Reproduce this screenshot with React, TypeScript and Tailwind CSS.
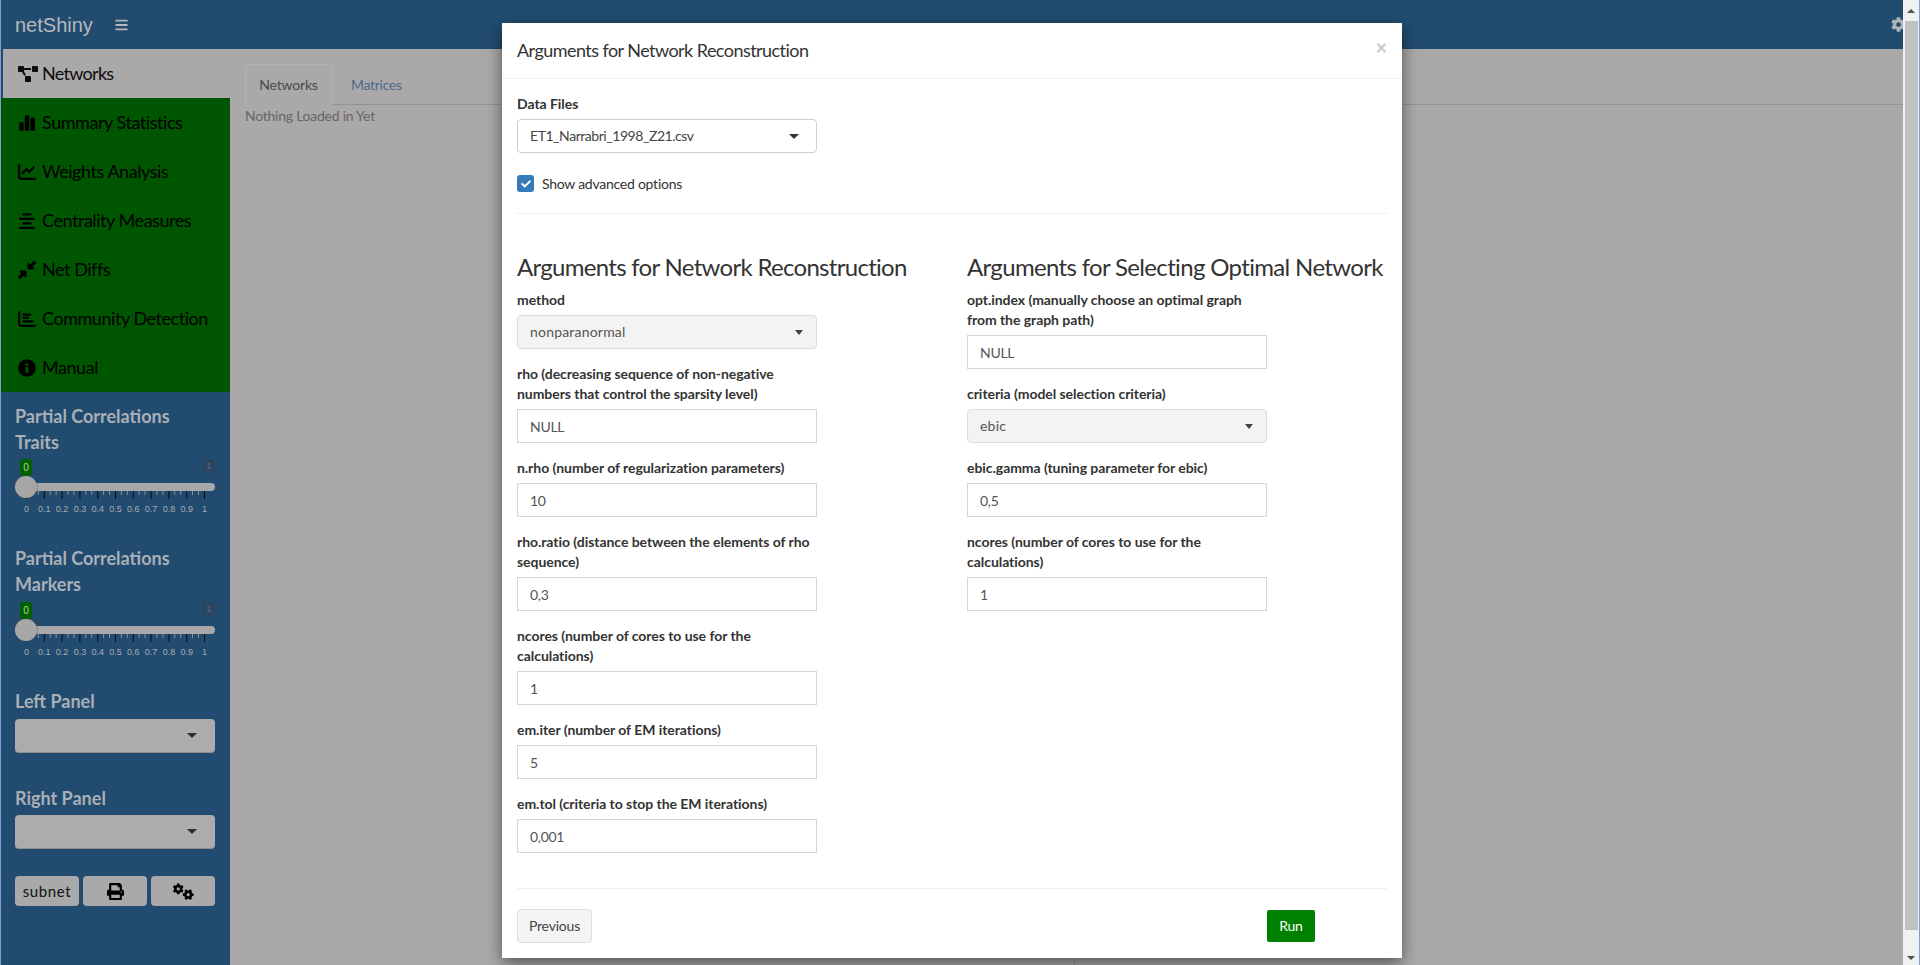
import React from 'react';
import { FaBars, FaCog, FaPrint, FaProjectDiagram, FaInfoCircle, FaCheck, FaAlignCenter } from 'react-icons/fa';
import { FaChartSimple, FaChartLine, FaChartBar, FaDownLeftAndUpRightToCenter, FaGears } from 'react-icons/fa6';

const navItems = [
    { label: 'Summary Statistics', Icon: FaChartSimple },
    { label: 'Weights Analysis', Icon: FaChartLine },
    { label: 'Centrality Measures', Icon: FaAlignCenter },
    { label: 'Net Diffs', Icon: FaDownLeftAndUpRightToCenter },
    { label: 'Community Detection', Icon: FaChartBar },
    { label: 'Manual', Icon: FaInfoCircle },
];

const ticks = ['0', '0.1', '0.2', '0.3', '0.4', '0.5', '0.6', '0.7', '0.8', '0.9', '1'];

const Caret = ({ className }: { className: string }) => (
    <span className={`w-0 h-0 border-t-[5px] ${className}`} />
);

const Slider = () => (
    <div className="relative h-[62px] w-[200px]">
        <span className="absolute left-[5px] top-0 w-[12px] h-[17px] rounded-[3px] bg-[#006000] text-[#b9cf9c] text-[10px] leading-[17px] text-center font-['Liberation_Sans',sans-serif]">0</span>
        <span className="absolute right-0 top-0 w-[12px] h-[14px] rounded-[3px] bg-[#2b4560] text-[#55616e] text-[9px] font-bold leading-[14px] text-center font-['Liberation_Sans',sans-serif]">1</span>
        <div className="absolute left-0 right-0 top-[24px] h-[8px] rounded-full bg-[#a8a8a8]" />
        <svg className="absolute left-0 top-[32px]" width="200" height="14">
            {ticks.map((_, i) => (
                <line key={i} x1={11.5 + i * 17.8} x2={11.5 + i * 17.8} y1={i === 0 ? 7 : 0} y2="8" stroke="#0c0c0c" strokeWidth="1" />
            ))}
            {Array.from({ length: 30 }, (_, i) => i).filter(i => i % 3 !== 0).map(i => (
                <line key={i} x1={11.5 + i * 5.93} x2={11.5 + i * 5.93} y1="0" y2="4" stroke="#8b8f94" strokeWidth="1" />
            ))}
        </svg>
        <div className="absolute left-0 top-[17px] w-[22px] h-[22px] rounded-full bg-[#a6a6a6] shadow-[0_0_2px_#555]" />
        <div className="absolute left-0 top-[44px] w-full">
            {ticks.map((t, i) => (
                <span key={t} className="absolute w-[24px] -ml-[12px] top-0 text-center text-[9px] leading-[12px] text-[#a9adb1] font-['Liberation_Sans',sans-serif]" style={{ left: 11.5 + i * 17.8 }}>{t}</span>
            ))}
        </div>
    </div>
);

const Label = ({ lines }: { lines: string[] }) => (
    <label className="block mb-[5px] text-sm leading-5 font-bold text-[#333] tracking-[-0.05px] whitespace-nowrap">
        {lines.map(l => <span key={l} className="block">{l}</span>)}
    </label>
);

const TextField = ({ lines, value }: { lines: string[]; value: string }) => (
    <div className="mb-[15px] w-[300px]">
        <Label lines={lines} />
        <input readOnly value={value} className="block w-full h-[34px] px-3 text-sm tracking-[-0.3px] text-[#555] bg-white border border-[#d2d6de] outline-none" />
    </div>
);

const SelectField = ({ lines, value }: { lines: string[]; value: string }) => (
    <div className="mb-[15px] w-[300px]">
        <Label lines={lines} />
        <div className="flex items-center justify-between h-[34px] pl-3 pr-[13px] text-sm text-[#555] bg-[#f3f3f3] border border-[#dcdcdc] rounded-[4px] tracking-[0.2px]">
            {value}
            <Caret className="border-x-[4px] border-x-transparent border-t-[#444]" />
        </div>
    </div>
);

const sideHeading = "text-[18px] leading-[25.7px] font-bold text-[#a9afb6]";

export default function App() {
    return (
        <div className="relative flex h-screen w-full overflow-hidden bg-[#aaa8a9] font-['Lato',sans-serif] text-[#333]">
            <div className="flex flex-col flex-1 min-w-0 border-l border-l-[#7f9fd0]">
                {/* top bar */}
                <header className="flex items-center justify-between h-[49px] shrink-0 overflow-hidden bg-[#214c70]">
                    <div className="flex items-center">
                        <span className="ml-[14px] text-[20px] text-[#b6b8ba] font-['Liberation_Sans',sans-serif]">netShiny</span>
                        <FaBars className="ml-[22px] w-[13px] h-[14px] text-[#b6b8ba]" />
                    </div>
                    <FaCog className="-mr-[3px] w-[15px] h-[15px] shrink-0 text-[#aeb3b8]" />
                </header>

                <div className="flex flex-1 min-h-0">
                    {/* sidebar */}
                    <aside className="w-[229px] shrink-0 bg-[#214b6f]">
                        <div className="flex items-center h-[49px] ml-[2px] pl-[15px] bg-[#aaa8a9] text-[#0d0d0d] text-[18px] tracking-[-0.7px]">
                            <FaProjectDiagram className="w-[20px] h-[18px] mr-[4px]" />
                            Networks
                        </div>
                        <nav className="bg-[#005500]">
                            {navItems.map(({ label, Icon }) => (
                                <div key={label} className="flex items-center h-[49px] pl-[17px] text-[18px] tracking-[-0.45px] text-black">
                                    <span className="flex justify-start w-[24px] shrink-0"><Icon className="w-[18px] h-[18px]" /></span>
                                    {label}
                                </div>
                            ))}
                        </nav>
                        <div className="pl-[14px] pt-[12px] w-[214px]">
                            <p className={sideHeading}>Partial Correlations<br />Traits</p>
                            <div className="mt-[4px]"><Slider /></div>
                            <p className={`mt-[25px] ${sideHeading}`}>Partial Correlations<br />Markers</p>
                            <div className="mt-[4px]"><Slider /></div>
                            <p className={`mt-[25px] ${sideHeading}`}>Left Panel</p>
                            <div className="mt-[4px] flex items-center justify-end h-[34px] pr-[18px] rounded-[4px] bg-[#acacac] border-b border-[#8d8d8d]">
                                <Caret className="border-x-[5px] border-x-transparent border-t-[#2c2c2c]" />
                            </div>
                            <p className={`mt-[33px] ${sideHeading}`}>Right Panel</p>
                            <div className="mt-[4px] flex items-center justify-end h-[34px] pr-[18px] rounded-[4px] bg-[#acacac] border-b border-[#8d8d8d]">
                                <Caret className="border-x-[5px] border-x-transparent border-t-[#2c2c2c]" />
                            </div>
                            <div className="flex gap-[4px] mt-[27px]">
                                <button className="w-[64px] h-[30px] rounded-[4px] bg-[#a9a9a9] text-[15px] text-[#111] tracking-[0.6px]">subnet</button>
                                <button className="flex items-center justify-center w-[64px] h-[30px] rounded-[4px] bg-[#a9a9a9]"><FaPrint className="w-[17px] h-[17px] text-black" /></button>
                                <button className="flex items-center justify-center w-[64px] h-[30px] rounded-[4px] bg-[#a9a9a9]"><FaGears className="w-[21px] h-[17px] text-black" /></button>
                            </div>
                        </div>
                    </aside>

                    {/* main */}
                    <main className="relative flex-1 pl-[15px] pt-[15px] text-sm">
                        <div className="flex h-[41px] border-b border-b-[#959394]">
                            <div className="flex items-center justify-center w-[87px] h-[41px] rounded-t-[4px] bg-[#aaa8a9] border border-[#b3b1b2] border-b-0 text-[#4a4a4a] tracking-[-0.2px]">Networks</div>
                            <div className="ml-[19px] flex items-center h-[41px] text-[#4f6b8a] tracking-[-0.3px]">Matrices</div>
                        </div>
                        <p className="mt-px leading-5 text-[#686667] tracking-[-0.25px]">Nothing Loaded in Yet</p>
                        <div className="absolute left-[844px] top-[200px] bottom-0 w-px bg-[#8f8d8e]" />
                    </main>
                </div>
            </div>

            {/* page scrollbar */}
            <div className="flex flex-col w-[17px] shrink-0 bg-[#f1f1f1] border-r border-r-[#7f9fd0]">
                <div className="flex items-center justify-center h-[21px] bg-[#f1f1f1]"><span className="w-0 h-0 border-x-[4px] border-x-transparent border-b-[4px] border-b-[#505050]" /></div>
                <div className="ml-[2px] mr-px h-[909px] bg-[#c1c1c1]" />
                <div className="flex flex-1 items-end justify-center pb-[5px]"><span className="w-0 h-0 border-x-[4px] border-x-transparent border-t-[4px] border-t-[#505050]" /></div>
            </div>

            {/* modal */}
            <div className="absolute left-[502px] top-[23px] w-[900px] bg-white shadow-[0_5px_15px_rgba(0,0,0,0.5)]">
                <div className="relative h-[56px] px-[15px] flex items-center border-b border-[#f4f4f4]">
                    <h4 className="text-[18px] text-[#333] tracking-[-0.55px]">Arguments for Network Reconstruction</h4>
                    <span className="absolute right-[15px] top-[12px] text-[20px] font-bold leading-6 text-[#c9c9c9]">×</span>
                </div>
                <div className="px-[15px] pt-[15px]">
                    <Label lines={['Data Files']} />
                    <div className="flex items-center justify-between w-[300px] h-[34px] pl-3 pr-[17px] text-sm tracking-[-0.45px] text-[#444] bg-white border border-[#cfcfcf] rounded-[4px]">
                        ET1_Narrabri_1998_Z21.csv
                        <Caret className="border-x-[5px] border-x-transparent border-t-[#333]" />
                    </div>
                    <div className="flex items-center h-[17px] mt-[22px]">
                        <span className="flex items-center justify-center w-[17px] h-[17px] rounded-[3px] bg-[#337ab7]"><FaCheck className="w-[10px] h-[10px] text-white" /></span>
                        <span className="ml-2 text-sm text-[#333] tracking-[-0.25px]">Show advanced options</span>
                    </div>
                    <hr className="mt-[21px] border-t border-[#eeeeee]" />
                    <div className="flex pt-[40px]">
                        <div className="w-[450px]">
                            <h3 className="h-[36px] text-[24px] leading-[26px] text-[#333] whitespace-nowrap tracking-[-0.7px]">Arguments for Network Reconstruction</h3>
                            <SelectField lines={['method']} value="nonparanormal" />
                            <TextField lines={['rho (decreasing sequence of non-negative', 'numbers that control the sparsity level)']} value="NULL" />
                            <TextField lines={['n.rho (number of regularization parameters)']} value="10" />
                            <TextField lines={['rho.ratio (distance between the elements of rho', 'sequence)']} value="0,3" />
                            <TextField lines={['ncores (number of cores to use for the', 'calculations)']} value="1" />
                            <TextField lines={['em.iter (number of EM iterations)']} value="5" />
                            <TextField lines={['em.tol (criteria to stop the EM iterations)']} value="0,001" />
                        </div>
                        <div>
                            <h3 className="h-[36px] text-[24px] leading-[26px] text-[#333] whitespace-nowrap tracking-[-0.66px]">Arguments for Selecting Optimal Network</h3>
                            <TextField lines={['opt.index (manually choose an optimal graph', 'from the graph path)']} value="NULL" />
                            <SelectField lines={['criteria (model selection criteria)']} value="ebic" />
                            <TextField lines={['ebic.gamma (tuning parameter for ebic)']} value="0,5" />
                            <TextField lines={['ncores (number of cores to use for the', 'calculations)']} value="1" />
                        </div>
                    </div>
                </div>
                <div className="mx-[15px] mt-[20px] pt-[20px] pb-[15px] flex items-center border-t border-[#eeeeee]">
                    <button className="w-[75px] h-[34px] rounded-[4px] bg-[#f4f4f4] border border-[#dddddd] text-sm text-[#444] tracking-[-0.2px]">Previous</button>
                    <button className="ml-[675px] w-[48px] h-[32px] rounded-[2px] bg-[#008000] text-sm text-white tracking-[-0.2px]">Run</button>
                </div>
            </div>
        </div>
    );
}
